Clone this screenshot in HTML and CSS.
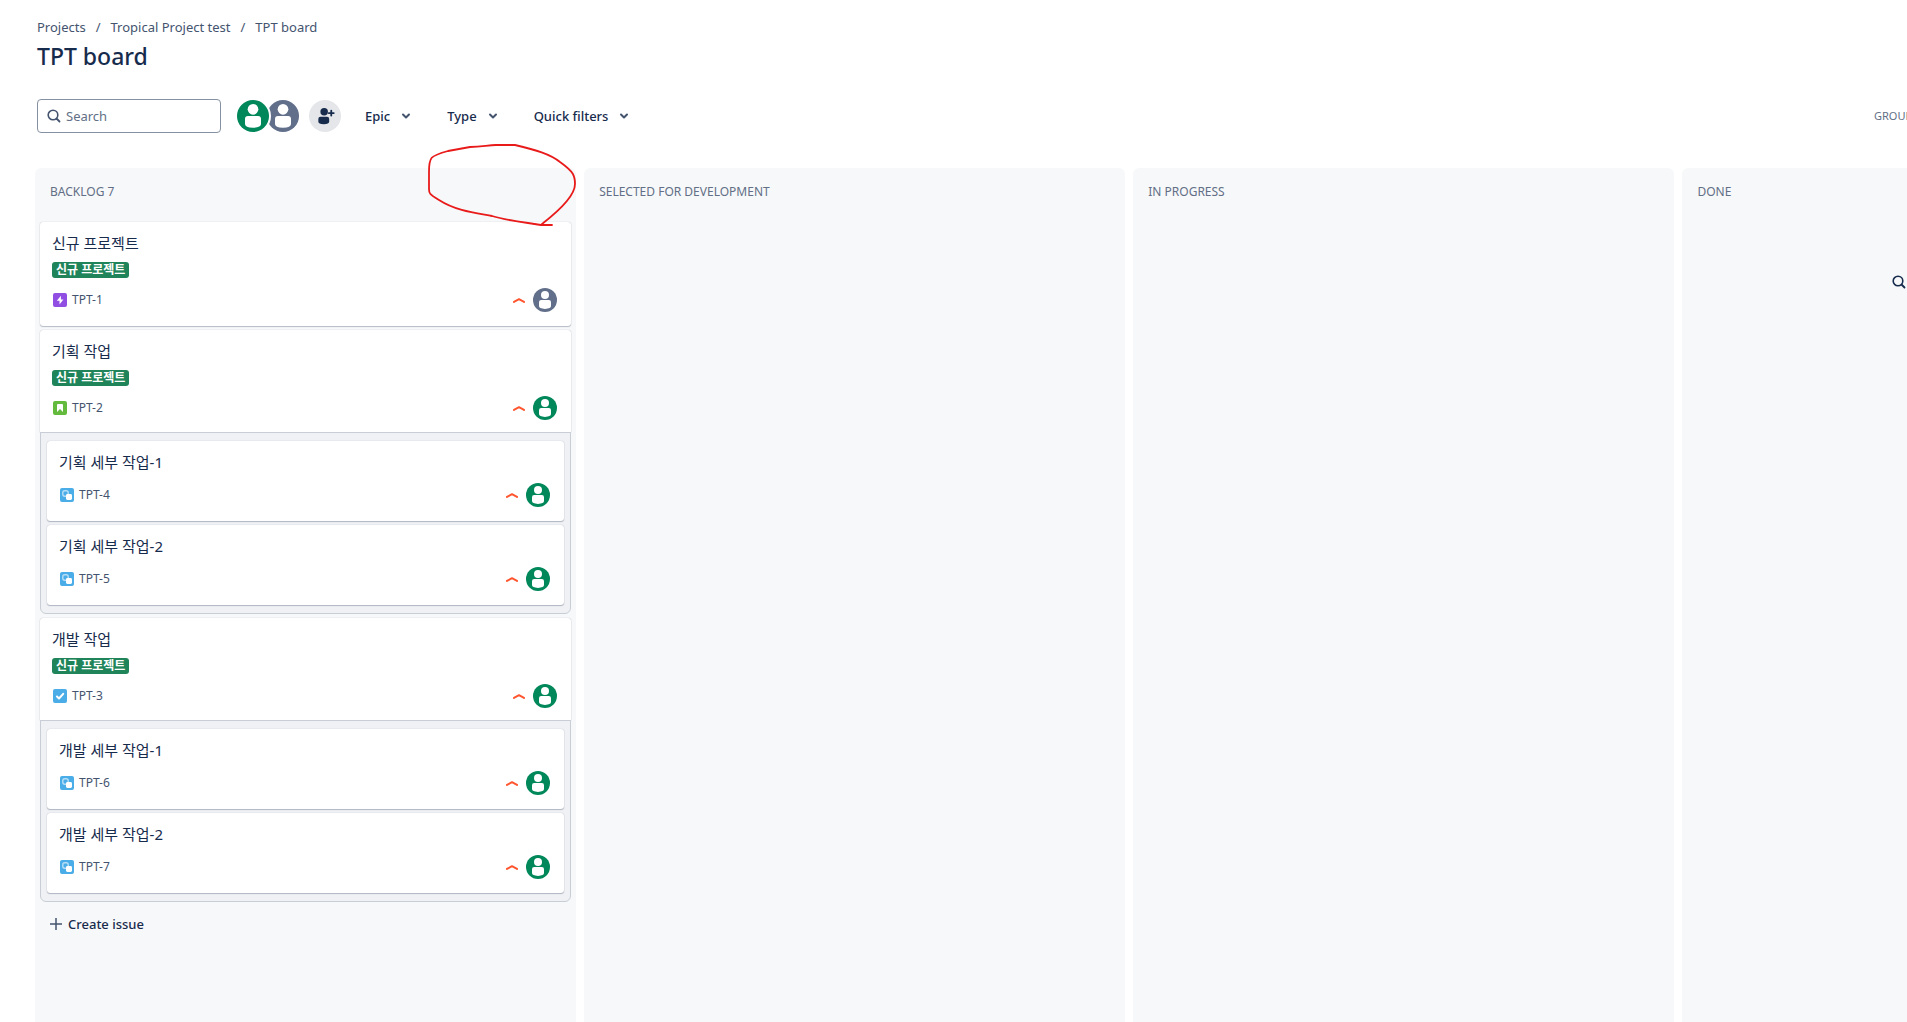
FILE: index.html
```html
<!DOCTYPE html>
<html lang="en">
<head>
<meta charset="utf-8">
<meta name="viewport" content="width=device-width, initial-scale=1">
<title>TPT board</title>
<link rel="stylesheet" href="styles.css">
</head>
<body>
<svg class="sprite" aria-hidden="true">
  <symbol id="person" viewBox="0 0 24 24">
    <circle cx="12" cy="12" r="12" fill="currentColor"/>
    <circle cx="12" cy="7" r="4" fill="#fff"/>
    <path d="M6 14.200Q6 12 8.200 12H15.800Q18 12 18 14.200V18Q18 20.600 12 20.900Q6 20.600 6 18Z" fill="#fff"/>
  </symbol>
  <symbol id="chevron" viewBox="0 0 24 24">
    <path d="M9 10.500L12 13.500L15 10.500" fill="none" stroke="currentColor" stroke-width="2" stroke-linecap="round" stroke-linejoin="round"/>
  </symbol>
  <symbol id="high" viewBox="0 0 16 16">
    <path d="M3 9.900L8 7.200L13 9.900" fill="none" stroke="#ff5630" stroke-width="2" stroke-linecap="round" stroke-linejoin="round"/>
  </symbol>
  <symbol id="search" viewBox="0 0 16 16">
    <circle cx="7" cy="7" r="4.800" fill="none" stroke="currentColor" stroke-width="1.600"/>
    <path d="M10.500 10.500L13.500 13.500" fill="none" stroke="currentColor" stroke-width="1.800" stroke-linecap="round"/>
  </symbol>
  <symbol id="epic" viewBox="0 0 16 16">
    <rect x="1" y="1" width="14" height="14" rx="2" fill="#904ee2"/>
    <path d="M8.900 3.800L4.800 8.700H7.500V12.400L11.400 7.400H8.900Z" fill="#fff"/>
  </symbol>
  <symbol id="story" viewBox="0 0 16 16">
    <rect x="1" y="1" width="14" height="14" rx="2" fill="#63ba3c"/>
    <path d="M5 5Q5 4 6 4H10Q11 4 11 5V12L8 9L5 12Z" fill="#fff"/>
  </symbol>
  <symbol id="task" viewBox="0 0 16 16">
    <rect x="1" y="1" width="14" height="14" rx="2" fill="#4bade8"/>
    <path d="M5 8.500L7 10.500L11.200 5.800" fill="none" stroke="#fff" stroke-width="2" stroke-linecap="round" stroke-linejoin="round"/>
  </symbol>
  <symbol id="subtask" viewBox="0 0 16 16">
    <rect x="1" y="1" width="14" height="14" rx="2" fill="#4bade8"/>
    <rect x="3.800" y="3.800" width="5.400" height="5.400" rx="2" fill="none" stroke="#b7def6" stroke-width="1.400"/>
    <rect x="7" y="7" width="6" height="6" rx="1.400" fill="#fff"/>
  </symbol>
</svg>

<header class="page-header">
  <nav aria-label="Breadcrumb">
    <ol class="breadcrumb">
      <li><a href="#projects">Projects</a></li>
      <li><a href="#project">Tropical Project test</a></li>
      <li><a href="#board">TPT board</a></li>
    </ol>
  </nav>
  <h1>TPT board</h1>
</header>

<div class="toolbar">
  <label class="search">
    <svg class="icon-16" aria-hidden="true"><use href="#search"/></svg>
    <input type="search" placeholder="Search" aria-label="Search">
  </label>
  <div class="people">
    <button class="avatar-lg green" aria-label="Green assignee"><svg><use href="#person"/></svg></button>
    <button class="avatar-lg grey" aria-label="Grey assignee"><svg><use href="#person"/></svg></button>
  </div>
  <button class="add-people" aria-label="Add people">
    <svg viewBox="0 0 24 24"><circle cx="11" cy="7" r="4.500" fill="#172b4d"/><path d="M4 15.500Q4 13 6.500 13H14.500Q17 13 17 15.500V19Q17 21.600 10.500 21.900Q4 21.600 4 19Z" fill="#172b4d"/><path d="M19.500 5.500V11.500M16.500 8.500H22.500" fill="none" stroke="#172b4d" stroke-width="2.200" stroke-linecap="round"/></svg>
  </button>
  <div class="filters">
    <button class="filter" aria-haspopup="true">Epic<svg class="icon-24" aria-hidden="true"><use href="#chevron"/></svg></button>
    <button class="filter" aria-haspopup="true">Type<svg class="icon-24" aria-hidden="true"><use href="#chevron"/></svg></button>
    <button class="filter" aria-haspopup="true">Quick filters<svg class="icon-24" aria-hidden="true"><use href="#chevron"/></svg></button>
  </div>
  <span class="group-by">GROUP</span>
</div>

<main class="board">
  <section class="column">
    <h2>BACKLOG 7</h2>
    <div class="cards">
      <article class="card">
        <h3>신규 프로젝트</h3>
        <span class="tag">신규 프로젝트</span>
        <div class="meta"><svg class="icon-16" aria-hidden="true"><use href="#epic"/></svg><a href="#TPT-1">TPT-1</a><svg class="icon-16 priority" aria-hidden="true"><use href="#high"/></svg><svg class="avatar grey" aria-hidden="true"><use href="#person"/></svg></div>
      </article>

      <div class="group">
        <article class="card parent">
          <h3>기획 작업</h3>
          <span class="tag">신규 프로젝트</span>
          <div class="meta"><svg class="icon-16" aria-hidden="true"><use href="#story"/></svg><a href="#TPT-2">TPT-2</a><svg class="icon-16 priority" aria-hidden="true"><use href="#high"/></svg><svg class="avatar green" aria-hidden="true"><use href="#person"/></svg></div>
        </article>
        <div class="subtasks">
          <article class="card">
            <h3>기획 세부 작업-1</h3>
            <div class="meta"><svg class="icon-16" aria-hidden="true"><use href="#subtask"/></svg><a href="#TPT-4">TPT-4</a><svg class="icon-16 priority" aria-hidden="true"><use href="#high"/></svg><svg class="avatar green" aria-hidden="true"><use href="#person"/></svg></div>
          </article>
          <article class="card">
            <h3>기획 세부 작업-2</h3>
            <div class="meta"><svg class="icon-16" aria-hidden="true"><use href="#subtask"/></svg><a href="#TPT-5">TPT-5</a><svg class="icon-16 priority" aria-hidden="true"><use href="#high"/></svg><svg class="avatar green" aria-hidden="true"><use href="#person"/></svg></div>
          </article>
        </div>
      </div>

      <div class="group">
        <article class="card parent">
          <h3>개발 작업</h3>
          <span class="tag">신규 프로젝트</span>
          <div class="meta"><svg class="icon-16" aria-hidden="true"><use href="#task"/></svg><a href="#TPT-3">TPT-3</a><svg class="icon-16 priority" aria-hidden="true"><use href="#high"/></svg><svg class="avatar green" aria-hidden="true"><use href="#person"/></svg></div>
        </article>
        <div class="subtasks">
          <article class="card">
            <h3>개발 세부 작업-1</h3>
            <div class="meta"><svg class="icon-16" aria-hidden="true"><use href="#subtask"/></svg><a href="#TPT-6">TPT-6</a><svg class="icon-16 priority" aria-hidden="true"><use href="#high"/></svg><svg class="avatar green" aria-hidden="true"><use href="#person"/></svg></div>
          </article>
          <article class="card">
            <h3>개발 세부 작업-2</h3>
            <div class="meta"><svg class="icon-16" aria-hidden="true"><use href="#subtask"/></svg><a href="#TPT-7">TPT-7</a><svg class="icon-16 priority" aria-hidden="true"><use href="#high"/></svg><svg class="avatar green" aria-hidden="true"><use href="#person"/></svg></div>
          </article>
        </div>
      </div>
    </div>
    <button class="create"><svg class="icon-16" viewBox="0 0 16 16" aria-hidden="true"><path d="M8 2V14M2 8H14" fill="none" stroke="#44546f" stroke-width="1.500"/></svg>Create issue</button>
    <svg class="scribble" viewBox="0 0 148 84" aria-hidden="true"><path d="M124 80H113L100 78C86 76 74 74 64 71C48 68 28 66 11 55C1 49 1 48 1 44V27C1 12 2 11 20 6L42 2C54 2 60 0 68 0H87C108 5 122 9 132 17C146 27 147 31 147 39C147 50 132 65 114 79" fill="none" stroke="#e81a1a" stroke-width="1.800" stroke-linecap="round" stroke-linejoin="round"/></svg>
  </section>
  <section class="column"><h2>SELECTED FOR DEVELOPMENT</h2></section>
  <section class="column"><h2>IN PROGRESS</h2></section>
  <section class="column last">
    <h2>DONE</h2>
    <button class="find" aria-label="Find"><svg class="icon-16"><use href="#search"/></svg></button>
  </section>
</main>
</body>
</html>
```
FILE: styles.css
```css
* { box-sizing: border-box; }

body {
  margin: 0;
  min-height: 100vh;
  display: flex;
  flex-direction: column;
  background: #fff;
  color: #172b4d;
  font: 13px/20px "Noto Sans", "Noto Sans CJK KR", sans-serif;
}

h1, h2, h3, ol { margin: 0; padding: 0; }
a { color: inherit; text-decoration: none; }
button { border: 0; padding: 0; background: none; color: inherit; font: inherit; cursor: pointer; }
svg { display: block; flex: none; }

.sprite { position: absolute; width: 0; height: 0; }
.icon-16 { width: 16px; height: 16px; }
.icon-24 { width: 24px; height: 24px; }
.green { color: #00875a; }
.grey { color: #626f8a; }

.page-header { padding: 17px 37px 0; }
.breadcrumb { display: flex; list-style: none; color: #44546f; }
.breadcrumb li + li::before { content: "/"; padding: 0 10px; }

h1 { margin-top: 5px; font-size: 23px; line-height: 28px; font-weight: 500; }

.toolbar { display: flex; align-items: center; height: 34px; margin: 29px 0 35px; padding-left: 37px; }

.search {
  display: flex;
  align-items: center;
  gap: 4px;
  width: 184px;
  height: 34px;
  padding: 0 8px;
  border: 1px solid #8590a2;
  border-radius: 4px;
  color: #44546f;
}
.search input { flex: 1; min-width: 0; border: 0; padding: 0; outline: 0; background: none; color: #172b4d; font: inherit; }
.search input::placeholder { color: #626f86; opacity: 1; }

.people { display: flex; margin-left: 14px; }
.avatar-lg { border: 2px solid #fff; border-radius: 50%; background: #fff; }
.avatar-lg svg { width: 32px; height: 32px; }
.avatar-lg.green { z-index: 1; margin-right: -6px; }

.add-people { display: grid; place-items: center; width: 32px; height: 32px; margin-left: 8px; border-radius: 50%; background: #e4e6ea; }
.add-people svg { width: 20px; height: 20px; }

.filters { display: flex; gap: 5px; margin-left: 12px; font-weight: 500; }
.filter { display: flex; align-items: center; gap: 4px; height: 32px; padding: 0 12px; }
.filter svg { color: #44546f; }

.group-by { width: 33px; margin-left: auto; overflow: hidden; color: #626f86; font-size: 11px; white-space: nowrap; }

.board { flex: 1; display: grid; grid-template-columns: repeat(3, 1fr) 12%; gap: 8px; padding-left: 35px; }
.column { position: relative; padding: 0 5px; border-radius: 6px 6px 0 0; background: #f7f8f9; }
.column.last { border-top-right-radius: 0; }

h2 { padding: 14px 10px 20px; color: #626f86; font-size: 12px; line-height: 20px; font-weight: 400; }

.cards, .subtasks { display: flex; flex-direction: column; gap: 4px; }

.card {
  padding: 11px 12px 12px;
  border-radius: 3px;
  background: #fff;
  box-shadow: 0 1px 1px #091e4240, 0 0 1px #091e424f;
}
.card.parent { padding-bottom: 10px; border-radius: 3px 3px 0 0; }

h3 { margin-bottom: 9px; font-size: 15px; line-height: 20px; font-weight: 400; }

.tag {
  display: block;
  width: fit-content;
  height: 16px;
  margin-bottom: 8px;
  padding: 0 4px;
  border-radius: 3px;
  background: #1f845a;
  color: #fff;
  font-size: 12px;
  line-height: 16px;
  font-weight: 700;
}

.meta { display: flex; align-items: center; height: 28px; color: #44546f; font-size: 12px; }
.meta a { margin-left: 4px; }
.priority { margin-left: auto; }
.avatar { width: 24px; height: 24px; margin: 0 2px 0 6px; }

.subtasks { padding: 8px 6px; border: 1px solid #c9ced6; border-radius: 0 0 6px 6px; background: #f0f1f4; }

.create { display: flex; align-items: center; gap: 4px; height: 32px; margin: 6px 0 0 8px; font-weight: 500; }

/* Hand-drawn mark over the backlog header */
.scribble { position: absolute; top: -23px; right: 0; width: 148px; height: 84px; overflow: visible; pointer-events: none; }

.find { position: absolute; top: 106px; right: 0; color: #172b4d; }
```
